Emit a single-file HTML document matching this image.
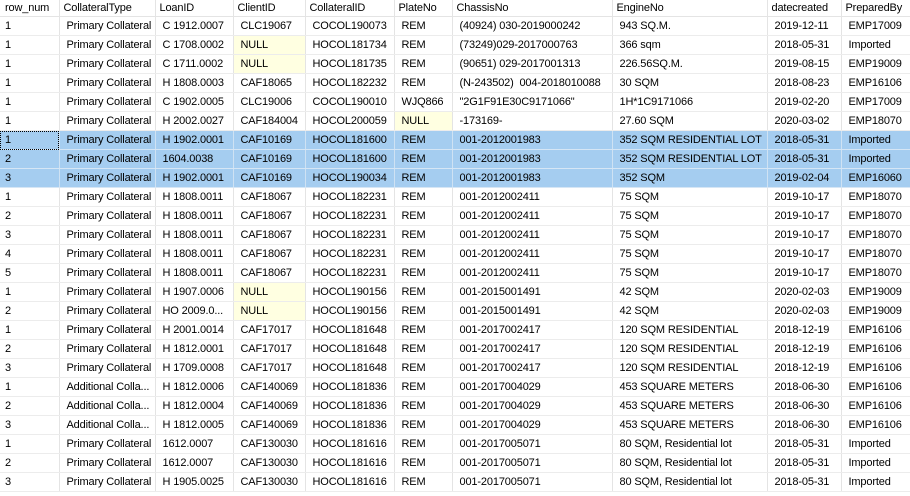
<!DOCTYPE html>
<html><head><meta charset="utf-8"><style>
body{margin:0;width:910px;height:496px;overflow:hidden;background:#fff;font-family:"Liberation Sans",Arial,sans-serif;font-size:11px;letter-spacing:-0.15px;color:#000}
table{border-collapse:collapse;table-layout:fixed;width:910px}
td,th{height:18px;padding:0 0 0 7px;border-right:1px solid #e4e4e4;border-bottom:1px solid #ececec;white-space:nowrap;overflow:hidden;text-align:left;font-weight:normal;line-height:18px}
th{height:16px;line-height:16px;padding-left:4px;border-bottom:1px solid #e4e4e4;background:#fff}
td:first-child,th:first-child{padding-left:5px}
tr.s td{background:#a5cdf0;border-bottom-color:#d6e6f5;border-right-color:#cfe2f3}
tr.s.f td:first-child{outline:1px dotted #000;outline-offset:-1px}
td.n{background:#ffffe1}
</style></head><body>
<table>
<colgroup><col style="width:59px"><col style="width:96px"><col style="width:78px"><col style="width:72px"><col style="width:89px"><col style="width:58px"><col style="width:160px"><col style="width:155px"><col style="width:74px"><col style="width:69px"></colgroup>
<tr><th>row_num</th><th>CollateralType</th><th>LoanID</th><th>ClientID</th><th>CollateralID</th><th>PlateNo</th><th>ChassisNo</th><th>EngineNo</th><th>datecreated</th><th>PreparedBy</th></tr>
<tr><td>1</td><td>Primary Collateral</td><td>C 1912.0007</td><td>CLC19067</td><td>COCOL190073</td><td>REM</td><td>(40924) 030-2019000242</td><td>943 SQ.M.</td><td>2019-12-11</td><td>EMP17009</td></tr>
<tr><td>1</td><td>Primary Collateral</td><td>C 1708.0002</td><td class="n">NULL</td><td>HOCOL181734</td><td>REM</td><td>(73249)029-2017000763</td><td>366 sqm</td><td>2018-05-31</td><td>Imported</td></tr>
<tr><td>1</td><td>Primary Collateral</td><td>C 1711.0002</td><td class="n">NULL</td><td>HOCOL181735</td><td>REM</td><td>(90651) 029-2017001313</td><td>226.56SQ.M.</td><td>2019-08-15</td><td>EMP19009</td></tr>
<tr><td>1</td><td>Primary Collateral</td><td>H 1808.0003</td><td>CAF18065</td><td>HOCOL182232</td><td>REM</td><td>(N-243502)&nbsp; 004-2018010088</td><td>30 SQM</td><td>2018-08-23</td><td>EMP16106</td></tr>
<tr><td>1</td><td>Primary Collateral</td><td>C 1902.0005</td><td>CLC19006</td><td>COCOL190010</td><td>WJQ866</td><td>"2G1F91E30C9171066"</td><td>1H*1C9171066</td><td>2019-02-20</td><td>EMP17009</td></tr>
<tr><td>1</td><td>Primary Collateral</td><td>H 2002.0027</td><td>CAF184004</td><td>HOCOL200059</td><td class="n">NULL</td><td>-173169-</td><td>27.60 SQM</td><td>2020-03-02</td><td>EMP18070</td></tr>
<tr class="s f"><td>1</td><td>Primary Collateral</td><td>H 1902.0001</td><td>CAF10169</td><td>HOCOL181600</td><td>REM</td><td>001-2012001983</td><td>352 SQM RESIDENTIAL LOT</td><td>2018-05-31</td><td>Imported</td></tr>
<tr class="s"><td>2</td><td>Primary Collateral</td><td>1604.0038</td><td>CAF10169</td><td>HOCOL181600</td><td>REM</td><td>001-2012001983</td><td>352 SQM RESIDENTIAL LOT</td><td>2018-05-31</td><td>Imported</td></tr>
<tr class="s"><td>3</td><td>Primary Collateral</td><td>H 1902.0001</td><td>CAF10169</td><td>HOCOL190034</td><td>REM</td><td>001-2012001983</td><td>352 SQM</td><td>2019-02-04</td><td>EMP16060</td></tr>
<tr><td>1</td><td>Primary Collateral</td><td>H 1808.0011</td><td>CAF18067</td><td>HOCOL182231</td><td>REM</td><td>001-2012002411</td><td>75 SQM</td><td>2019-10-17</td><td>EMP18070</td></tr>
<tr><td>2</td><td>Primary Collateral</td><td>H 1808.0011</td><td>CAF18067</td><td>HOCOL182231</td><td>REM</td><td>001-2012002411</td><td>75 SQM</td><td>2019-10-17</td><td>EMP18070</td></tr>
<tr><td>3</td><td>Primary Collateral</td><td>H 1808.0011</td><td>CAF18067</td><td>HOCOL182231</td><td>REM</td><td>001-2012002411</td><td>75 SQM</td><td>2019-10-17</td><td>EMP18070</td></tr>
<tr><td>4</td><td>Primary Collateral</td><td>H 1808.0011</td><td>CAF18067</td><td>HOCOL182231</td><td>REM</td><td>001-2012002411</td><td>75 SQM</td><td>2019-10-17</td><td>EMP18070</td></tr>
<tr><td>5</td><td>Primary Collateral</td><td>H 1808.0011</td><td>CAF18067</td><td>HOCOL182231</td><td>REM</td><td>001-2012002411</td><td>75 SQM</td><td>2019-10-17</td><td>EMP18070</td></tr>
<tr><td>1</td><td>Primary Collateral</td><td>H 1907.0006</td><td class="n">NULL</td><td>HOCOL190156</td><td>REM</td><td>001-2015001491</td><td>42 SQM</td><td>2020-02-03</td><td>EMP19009</td></tr>
<tr><td>2</td><td>Primary Collateral</td><td>HO 2009.0...</td><td class="n">NULL</td><td>HOCOL190156</td><td>REM</td><td>001-2015001491</td><td>42 SQM</td><td>2020-02-03</td><td>EMP19009</td></tr>
<tr><td>1</td><td>Primary Collateral</td><td>H 2001.0014</td><td>CAF17017</td><td>HOCOL181648</td><td>REM</td><td>001-2017002417</td><td>120 SQM RESIDENTIAL</td><td>2018-12-19</td><td>EMP16106</td></tr>
<tr><td>2</td><td>Primary Collateral</td><td>H 1812.0001</td><td>CAF17017</td><td>HOCOL181648</td><td>REM</td><td>001-2017002417</td><td>120 SQM RESIDENTIAL</td><td>2018-12-19</td><td>EMP16106</td></tr>
<tr><td>3</td><td>Primary Collateral</td><td>H 1709.0008</td><td>CAF17017</td><td>HOCOL181648</td><td>REM</td><td>001-2017002417</td><td>120 SQM RESIDENTIAL</td><td>2018-12-19</td><td>EMP16106</td></tr>
<tr><td>1</td><td>Additional Colla...</td><td>H 1812.0006</td><td>CAF140069</td><td>HOCOL181836</td><td>REM</td><td>001-2017004029</td><td>453 SQUARE METERS</td><td>2018-06-30</td><td>EMP16106</td></tr>
<tr><td>2</td><td>Additional Colla...</td><td>H 1812.0004</td><td>CAF140069</td><td>HOCOL181836</td><td>REM</td><td>001-2017004029</td><td>453 SQUARE METERS</td><td>2018-06-30</td><td>EMP16106</td></tr>
<tr><td>3</td><td>Additional Colla...</td><td>H 1812.0005</td><td>CAF140069</td><td>HOCOL181836</td><td>REM</td><td>001-2017004029</td><td>453 SQUARE METERS</td><td>2018-06-30</td><td>EMP16106</td></tr>
<tr><td>1</td><td>Primary Collateral</td><td>1612.0007</td><td>CAF130030</td><td>HOCOL181616</td><td>REM</td><td>001-2017005071</td><td>80 SQM, Residential lot</td><td>2018-05-31</td><td>Imported</td></tr>
<tr><td>2</td><td>Primary Collateral</td><td>1612.0007</td><td>CAF130030</td><td>HOCOL181616</td><td>REM</td><td>001-2017005071</td><td>80 SQM, Residential lot</td><td>2018-05-31</td><td>Imported</td></tr>
<tr><td>3</td><td>Primary Collateral</td><td>H 1905.0025</td><td>CAF130030</td><td>HOCOL181616</td><td>REM</td><td>001-2017005071</td><td>80 SQM, Residential lot</td><td>2018-05-31</td><td>Imported</td></tr>
</table>
</body></html>
